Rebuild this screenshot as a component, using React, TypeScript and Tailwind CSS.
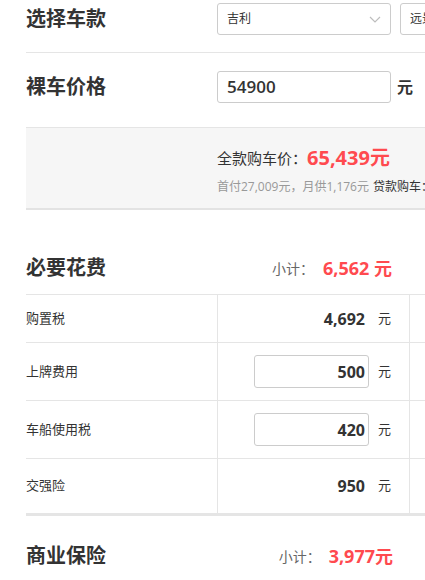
import React from "react";

function Chevron() {
  return (
    <svg width="12" height="7" viewBox="0 0 12 7" fill="none">
      <path d="M1 1l5 5 5-5" stroke="#bdbdbd" strokeWidth="1.2" />
    </svg>
  );
}

function Row({ label, h, children }: { label: string; h: string; children: React.ReactNode }) {
  return (
    <div className={`flex ${h} border-b border-[#e5e5e5]`}>
      <div className="w-[191px] flex items-center text-[13px] text-[#333]">{label}</div>
      <div className="w-[192px] border-l border-[#e5e5e5] flex items-center justify-end pr-[18px]">
        {children}
        <span className="text-[13px] text-[#333]">元</span>
      </div>
      <div className="flex-1 border-l border-[#e5e5e5]" />
    </div>
  );
}

function LastRow({ label, children }: { label: string; children: React.ReactNode }) {
  return (
    <div className="flex h-[57px] border-b-[3px] border-[#e5e5e5]">
      <div className="w-[191px] flex items-center text-[13px] text-[#333]">{label}</div>
      <div className="w-[192px] border-l border-[#e5e5e5] flex items-center justify-end pr-[18px]">
        {children}
        <span className="text-[13px] text-[#333]">元</span>
      </div>
      <div className="flex-1 border-l border-[#e5e5e5]" />
    </div>
  );
}

function Static({ v }: { v: string }) {
  return <span className="text-[16px] font-bold text-[#333] mr-[13px]">{v}</span>;
}

function Input({ v }: { v: string }) {
  return (
    <div className="w-[115px] h-[33px] border border-[#cccccc] rounded-[3px] flex items-center justify-end pr-[3px] text-[16px] font-bold text-[#333] mr-[9px] bg-white">
      {v}
    </div>
  );
}

export default function App() {
  return (
    <div className="w-[425px] h-[580px] overflow-hidden bg-white font-['Open_Sans','Noto_Sans_CJK_SC',sans-serif] text-[#333]">
      <div className="pl-[26px] w-[640px]">
        <div className="flex items-center h-[32px] mt-[3px] mb-[17px]">
          <div className="w-[191px] text-[20px] font-bold text-[#333]">选择车款</div>
          <div className="w-[174px] h-[32px] border border-[#cccccc] rounded-[3px] flex items-center justify-between pl-[9px] pr-[9px] text-[12px] text-[#333]">
            <span>吉利</span>
            <Chevron />
          </div>
          <div className="ml-[9px] w-[174px] h-[32px] border border-[#cccccc] rounded-[3px] flex items-center justify-between pl-[9px] pr-[9px] text-[12px] text-[#333]">
            <span>远景</span>
            <Chevron />
          </div>
        </div>
        <div className="h-px bg-[#e5e5e5]" />
        <div className="flex items-center pt-[18px] pb-[24px]">
          <div className="w-[191px] text-[20px] font-bold text-[#333]">裸车价格</div>
          <div className="w-[174px] h-[32px] border border-[#cccccc] rounded-[3px] flex items-center pl-[9px] text-[17px] font-semibold text-[#333]">
            54900
          </div>
          <span className="ml-[6px] text-[16px] font-bold text-[#333]">元</span>
        </div>
        <div className="h-px bg-[#e5e5e5]" />
        <div className="h-[82px] bg-[#f6f6f6] border-b-2 border-[#e3e3e3] pl-[191px] pt-[16px]">
          <div className="h-[28px] flex items-center whitespace-nowrap">
            <span className="text-[15px] text-[#333]">全款购车价：</span>
            <span className="text-[20px] font-bold text-[#ff4a4f]">65,439元</span>
          </div>
          <div className="mt-[6px] h-[18px] flex items-center whitespace-nowrap text-[12px]">
            <span className="text-[#999]">首付27,009元，月供1,176元</span>
            <span className="ml-[4px] text-[#333]">贷款购车：67,233元</span>
          </div>
        </div>
        <div className="mt-[32px] h-[52px] w-[366px] flex items-center justify-between">
          <div className="text-[20px] font-bold text-[#333]">必要花费</div>
          <div className="flex items-center">
            <span className="text-[14px] text-[#666]">小计：</span>
            <span className="ml-[9px] text-[18px] font-bold text-[#ff4a4f]">6,562 元</span>
          </div>
        </div>
        <div className="border-t border-[#e5e5e5]">
          <Row label="购置税" h="h-[48px]">
            <Static v="4,692" />
          </Row>
          <Row label="上牌费用" h="h-[58px]">
            <Input v="500" />
          </Row>
          <Row label="车船使用税" h="h-[58px]">
            <Input v="420" />
          </Row>
          <LastRow label="交强险">
            <Static v="950" />
          </LastRow>
        </div>
        <div className="mt-[16px] h-[48px] w-[367px] flex items-center justify-between">
          <div className="text-[20px] font-bold text-[#333]">商业保险</div>
          <div className="flex items-center">
            <span className="text-[14px] text-[#666]">小计：</span>
            <span className="ml-[8px] text-[18px] font-bold text-[#ff4a4f]">3,977元</span>
          </div>
        </div>
      </div>
    </div>
  );
}
